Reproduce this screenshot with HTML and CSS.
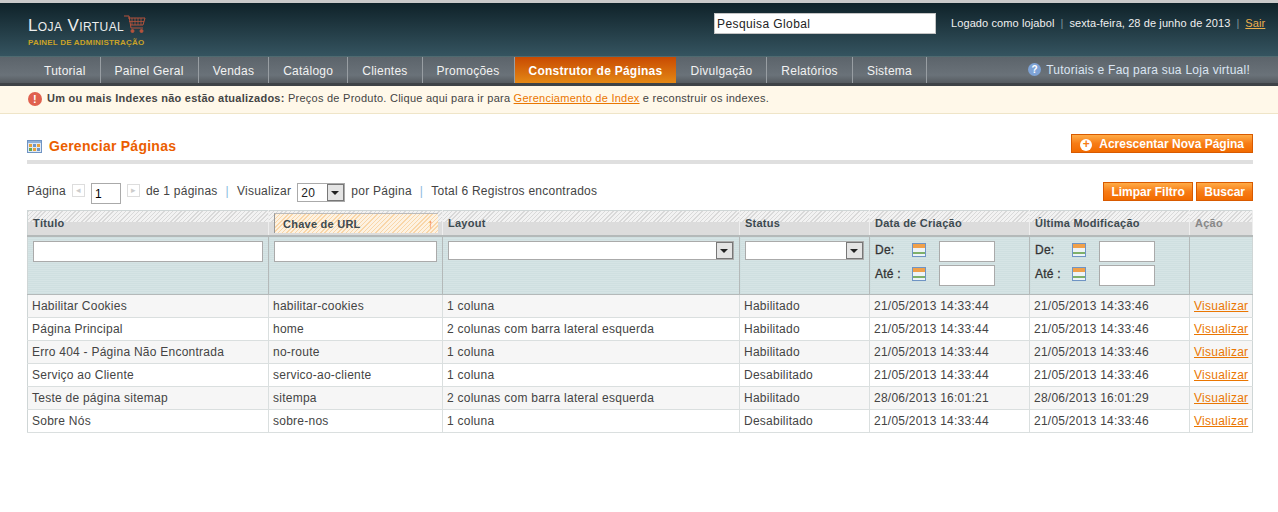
FILE: index.html
```html
<!DOCTYPE html>
<html>

<head>
    <title>Gerenciar Páginas</title>
    <link rel="stylesheet" href="styles.css">
</head>

<body>
    <div class="header">
        <div class="logo">
            <div class="logo-name">
                <span>Loja Virtual</span>
                <svg class="cart" width="22" height="20" viewBox="0 0 22 20" fill="none" stroke="#b5533c">
                    <path d="M0 1H5L7 13H19" />
                    <path d="M4 3H21L19 10H6" />
                    <path d="M8 3V10M11 3V10M14 3V10M17 3V10M5 6.500H20" stroke-width="0.800" />
                    <circle cx="8.500" cy="16" r="1.500" fill="#b5533c" />
                    <circle cx="17.500" cy="16" r="1.500" fill="#b5533c" />
                </svg>
            </div>
            <div class="logo-sub">PAINEL DE ADMINISTRAÇÃO</div>
        </div>
        <input class="global-search" type="text" value="Pesquisa Global" />
        <div class="user-info">
            <span>Logado como lojabol</span>
            <span class="sep">|</span>
            <span>sexta-feira, 28 de junho de 2013</span>
            <span class="sep">|</span>
            <a href="#">Sair</a>
        </div>
    </div>

    <div class="nav">
        <a class="nav-item" href="#">Tutorial</a>
        <a class="nav-item" href="#">Painel Geral</a>
        <a class="nav-item" href="#">Vendas</a>
        <a class="nav-item" href="#">Catálogo</a>
        <a class="nav-item" href="#">Clientes</a>
        <a class="nav-item" href="#">Promoções</a>
        <a class="nav-item active" href="#">Construtor de Páginas</a>
        <a class="nav-item" href="#">Divulgação</a>
        <a class="nav-item" href="#">Relatórios</a>
        <a class="nav-item" href="#">Sistema</a>
        <a class="nav-help" href="#">
            <span class="help-icon">?</span>
            Tutoriais e Faq para sua Loja virtual!
        </a>
    </div>

    <div class="notice">
        <span class="notice-icon">!</span>
        <span><b>Um ou mais Indexes não estão atualizados:</b> Preços de Produto. Clique aqui para ir para <a href="#">Gerenciamento de Index</a> e reconstruir os indexes.</span>
    </div>

    <div class="content">
        <div class="title-bar">
            <h3>
                <svg width="15" height="13" viewBox="0 0 15 13">
                    <rect x="0.500" y="0.500" width="14" height="12" fill="#dfe9f5" stroke="#6f94c4" />
                    <rect x="1" y="1" width="13" height="2" fill="#8fb0d8" />
                    <rect x="2" y="4" width="3" height="3" fill="#e9a13b" />
                    <rect x="6" y="4" width="3" height="3" fill="#6f94c4" />
                    <rect x="10" y="4" width="3" height="3" fill="#e9a13b" />
                    <rect x="2" y="8" width="3" height="3" fill="#6aa84f" />
                    <rect x="6" y="8" width="3" height="3" fill="#e9a13b" />
                    <rect x="10" y="8" width="3" height="3" fill="#6f94c4" />
                </svg>
                Gerenciar Páginas
            </h3>
            <button class="btn btn-add"><span class="plus">+</span>Acrescentar Nova Página</button>
        </div>

        <div class="pager">
            <div class="pager-left">
                <span>Página</span>
                <span class="page-arrow">&#9666;</span>
                <input class="page-input" type="text" value="1" />
                <span class="page-arrow">&#9656;</span>
                <span>de 1 páginas</span>
                <span class="pipe">|</span>
                <span>Visualizar</span>
                <span class="fake-select per-page">20<i class="arrow"></i></span>
                <span>por Página</span>
                <span class="pipe">|</span>
                <span>Total 6 Registros encontrados</span>
            </div>
            <div class="pager-right">
                <button class="btn">Limpar Filtro</button>
                <button class="btn">Buscar</button>
            </div>
        </div>

        <table class="grid">
            <colgroup>
                <col class="c-title">
                <col class="c-url">
                <col class="c-layout">
                <col class="c-status">
                <col class="c-date">
                <col class="c-date">
                <col>
            </colgroup>
            <thead>
                <tr class="headings">
                    <th>Título</th>
                    <th class="sorted"><span>Chave de URL<i class="sort-arrow">&#8593;</i></span></th>
                    <th>Layout</th>
                    <th>Status</th>
                    <th>Data de Criação</th>
                    <th>Última Modificação</th>
                    <th class="muted">Ação</th>
                </tr>
                <tr class="filter">
                    <td><input class="f-input" type="text" /></td>
                    <td><input class="f-input" type="text" /></td>
                    <td><span class="fake-select"><i class="arrow"></i></span></td>
                    <td><span class="fake-select"><i class="arrow"></i></span></td>
                    <td>
                        <div class="range"><b>De:</b><span class="cal"></span><input type="text" /></div>
                        <div class="range"><b>Até :</b><span class="cal"></span><input type="text" /></div>
                    </td>
                    <td>
                        <div class="range"><b>De:</b><span class="cal"></span><input type="text" /></div>
                        <div class="range"><b>Até :</b><span class="cal"></span><input type="text" /></div>
                    </td>
                    <td></td>
                </tr>
            </thead>
            <tbody>
                <tr>
                    <td>Habilitar Cookies</td>
                    <td>habilitar-cookies</td>
                    <td>1 coluna</td>
                    <td>Habilitado</td>
                    <td>21/05/2013 14:33:44</td>
                    <td>21/05/2013 14:33:46</td>
                    <td><a href="#">Visualizar</a></td>
                </tr>
                <tr>
                    <td>Página Principal</td>
                    <td>home</td>
                    <td>2 colunas com barra lateral esquerda</td>
                    <td>Habilitado</td>
                    <td>21/05/2013 14:33:44</td>
                    <td>21/05/2013 14:33:46</td>
                    <td><a href="#">Visualizar</a></td>
                </tr>
                <tr>
                    <td>Erro 404 - Página Não Encontrada</td>
                    <td>no-route</td>
                    <td>1 coluna</td>
                    <td>Habilitado</td>
                    <td>21/05/2013 14:33:44</td>
                    <td>21/05/2013 14:33:46</td>
                    <td><a href="#">Visualizar</a></td>
                </tr>
                <tr>
                    <td>Serviço ao Cliente</td>
                    <td>servico-ao-cliente</td>
                    <td>1 coluna</td>
                    <td>Desabilitado</td>
                    <td>21/05/2013 14:33:44</td>
                    <td>21/05/2013 14:33:46</td>
                    <td><a href="#">Visualizar</a></td>
                </tr>
                <tr>
                    <td>Teste de página sitemap</td>
                    <td>sitempa</td>
                    <td>2 colunas com barra lateral esquerda</td>
                    <td>Habilitado</td>
                    <td>28/06/2013 16:01:21</td>
                    <td>28/06/2013 16:01:29</td>
                    <td><a href="#">Visualizar</a></td>
                </tr>
                <tr>
                    <td>Sobre Nós</td>
                    <td>sobre-nos</td>
                    <td>1 coluna</td>
                    <td>Desabilitado</td>
                    <td>21/05/2013 14:33:44</td>
                    <td>21/05/2013 14:33:46</td>
                    <td><a href="#">Visualizar</a></td>
                </tr>
            </tbody>
        </table>
    </div>
</body>

</html>
```

FILE: styles.css
```css
* {
    box-sizing: border-box;
}

body {
    margin: 0;
    font-family: "Liberation Sans", Arial, sans-serif;
    font-size: 12px;
    letter-spacing: 0.25px;
    color: #444;
    background-color: #fff;
}

a {
    color: #ea7601;
}

.header {
    height: 57px;
    display: flex;
    align-items: flex-start;
    border-top: 3px solid #c9c9c9;
    border-bottom: 1px solid #4f6a70;
    background: linear-gradient(#0f2229, #355460);
}

.logo {
    width: 714px;
    padding: 12px 0 0 28px;
}

.logo-name {
    display: flex;
    height: 21px;
    color: #eee;
}

.logo-name span {
    font-size: 17px;
    font-variant: small-caps;
    line-height: 22px;
    letter-spacing: 0.4px;
}

.logo-sub {
    margin-top: 2px;
    font-size: 8px;
    font-weight: bold;
    letter-spacing: 0.2px;
    color: #c9a227;
}

.global-search {
    width: 222px;
    height: 21px;
    margin-top: 10px;
    padding: 0 2px;
    border: 1px solid #c4c4c4;
    font-family: inherit;
    font-size: 12px;
    letter-spacing: 0.4px;
    color: #222;
    background-color: #fff;
}

.user-info {
    display: flex;
    gap: 6px;
    padding: 14px 0 0 15px;
    font-size: 11px;
    letter-spacing: 0.1px;
    color: #f0f0f0;
}

.user-info .sep {
    color: #7f959b;
}

.user-info a {
    color: #ebb04d;
}

.nav {
    height: 29px;
    display: flex;
    padding-left: 30px;
    border-bottom: 3px solid #3e4347;
    background: linear-gradient(#5c646b, #6a7279 70%, #555b60);
}

.nav-item {
    padding: 7px 14px 0;
    border-right: 1px solid #989ea3;
    color: #f2f2f2;
    text-decoration: none;
}

.nav-item.active {
    font-weight: bold;
    color: #fff;
    border-right: 0;
    border-left: 1px solid #989ea3;
    margin-left: -1px;
    background: linear-gradient(#c84a02, #e48815);
}

.nav-help {
    display: flex;
    align-items: flex-start;
    gap: 5px;
    margin-left: auto;
    padding: 6px 28px 0 0;
    color: #dbe5f2;
    text-decoration: none;
}

.help-icon {
    width: 13px;
    height: 13px;
    border-radius: 50%;
    font-size: 10px;
    font-weight: bold;
    line-height: 13px;
    text-align: center;
    color: #fff;
    background-color: #7ea3d6;
}

.notice {
    height: 28px;
    display: flex;
    gap: 5px;
    padding: 6px 0 0 28px;
    border-bottom: 1px solid #efe5c8;
    font-size: 11px;
    color: #444;
    background-color: #fff8e9;
}

.notice a {
    color: #ea7601;
}

.notice-icon {
    width: 14px;
    height: 14px;
    border-radius: 50%;
    font-weight: bold;
    line-height: 14px;
    text-align: center;
    color: #fff;
    background-color: #e0604e;
}

.content {
    padding: 0 25px 0 27px;
}

.title-bar {
    height: 50px;
    display: flex;
    justify-content: space-between;
    align-items: flex-start;
    padding-top: 20px;
    border-bottom: 4px solid #dfdfdf;
}

.title-bar h3 {
    display: flex;
    align-items: center;
    gap: 7px;
    margin: 4px 0 0;
    font-size: 14px;
    color: #eb5e00;
}

.btn {
    height: 19px;
    padding: 0 7px;
    border: 1px solid #d85a00;
    font-family: inherit;
    font-size: 12px;
    font-weight: bold;
    color: #fff;
    background: linear-gradient(#ffac47, #f77c16 50%, #f26b00);
}

.btn-add {
    padding: 0 8px;
}

.plus {
    display: inline-block;
    width: 12px;
    height: 12px;
    margin-right: 7px;
    border-radius: 50%;
    font-size: 12px;
    line-height: 11px;
    color: #f77c16;
    background-color: #fff;
}

.pager {
    height: 46px;
    display: flex;
    justify-content: space-between;
    align-items: flex-start;
    padding-top: 18px;
}

.pager-left {
    display: flex;
    align-items: flex-start;
    gap: 6px;
    padding-top: 2px;
}

.pipe {
    color: #8bbbe0;
    margin: 0 2px;
}

.page-arrow {
    width: 13px;
    height: 13px;
    border: 1px solid #ddd;
    font-size: 9px;
    line-height: 11px;
    text-align: center;
    color: #ccc;
}

.page-input {
    width: 30px;
    height: 21px;
    margin-top: -1px;
    padding: 2px 3px;
    border: 1px solid #aaa;
    font-family: inherit;
    font-size: 12px;
}

.fake-select {
    position: relative;
    display: block;
    height: 19px;
    padding: 2px 3px;
    border: 1px solid #aaa;
    color: #222;
    background-color: #fff;
}

.per-page {
    width: 48px;
    height: 19px;
    margin-top: -1px;
}

.arrow {
    position: absolute;
    top: 0;
    right: 0;
    width: 17px;
    height: 17px;
    border: 1px solid #777;
    background: #e4e4e4;
}

.arrow::after {
    content: "";
    position: absolute;
    left: 3px;
    top: 6px;
    border: 4px solid transparent;
    border-top: 4px solid #222;
}

.grid {
    width: 1226px;
    table-layout: fixed;
    border-collapse: collapse;
    border: 1px solid #cfd6d6;
}

.c-title {
    width: 241px;
}

.c-url {
    width: 174px;
}

.c-layout {
    width: 297px;
}

.c-status {
    width: 130px;
}

.c-date {
    width: 160px;
}

.headings th {
    height: 25px;
    padding: 0 5px;
    border-right: 1px solid #eee;
    border-bottom: 2px solid #b4b9b9;
    font-size: 11px;
    text-align: left;
    color: #3d4a50;
    background:
        repeating-linear-gradient(135deg, #d9d9d9 0 1px, #f2f2f2 1px 3px) top / 100% 11px no-repeat,
        #dcdcdc;
}

.headings th.muted {
    color: #888;
}

.headings th.sorted {
    padding: 2px 4px 2px 5px;
}

.sorted span {
    height: 20px;
    display: flex;
    justify-content: space-between;
    align-items: center;
    padding: 0 4px 0 8px;
    border-left: 1px solid #999;
    border-top: 1px solid #bbb;
    background: repeating-linear-gradient(135deg, #f9d6a8 0 1px, #fdf2e2 1px 3px);
}

.sort-arrow {
    font-style: normal;
    font-size: 13px;
    color: #f77c16;
}

.filter td {
    height: 58px;
    padding: 4px 5px 0;
    vertical-align: top;
    border-right: 1px solid #b4b9b9;
    border-bottom: 1px solid #b4b9b9;
    background:
        repeating-linear-gradient(0deg, #cfdfe0 0 1px, transparent 1px 2px),
        repeating-linear-gradient(90deg, #cfdfe0 0 1px, transparent 1px 2px),
        #dde9ea;
}

.filter td:last-child {
    border-right: 0;
}

.f-input {
    display: block;
    width: 100%;
    height: 21px;
    border: 1px solid #aaa;
    background-color: #fff;
}

.range {
    height: 24px;
    display: flex;
    align-items: flex-start;
    color: #333;
}

.range b {
    width: 37px;
    padding-top: 2px;
    font-weight: normal;
    -webkit-text-stroke: 0.3px #333;
}

.cal {
    width: 14px;
    height: 14px;
    margin-top: 2px;
    border: 1px solid #6f94c4;
    background: linear-gradient(#f0a04b 0 4px, #eef3f8 4px 8px, #7fb06a 8px 10px, #eef3f8 10px);
}

.range input {
    width: 56px;
    height: 21px;
    margin-left: 13px;
    border: 1px solid #aaa;
    background-color: #fff;
}

tbody td {
    height: 23px;
    padding: 0 4px;
    border-right: 1px solid #dadfdf;
    border-bottom: 1px solid #dadfdf;
    color: #444;
    white-space: nowrap;
}

tbody td:last-child {
    border-right: 0;
}

tbody tr:nth-child(odd) td {
    background-color: #f6f6f6;
}
```
